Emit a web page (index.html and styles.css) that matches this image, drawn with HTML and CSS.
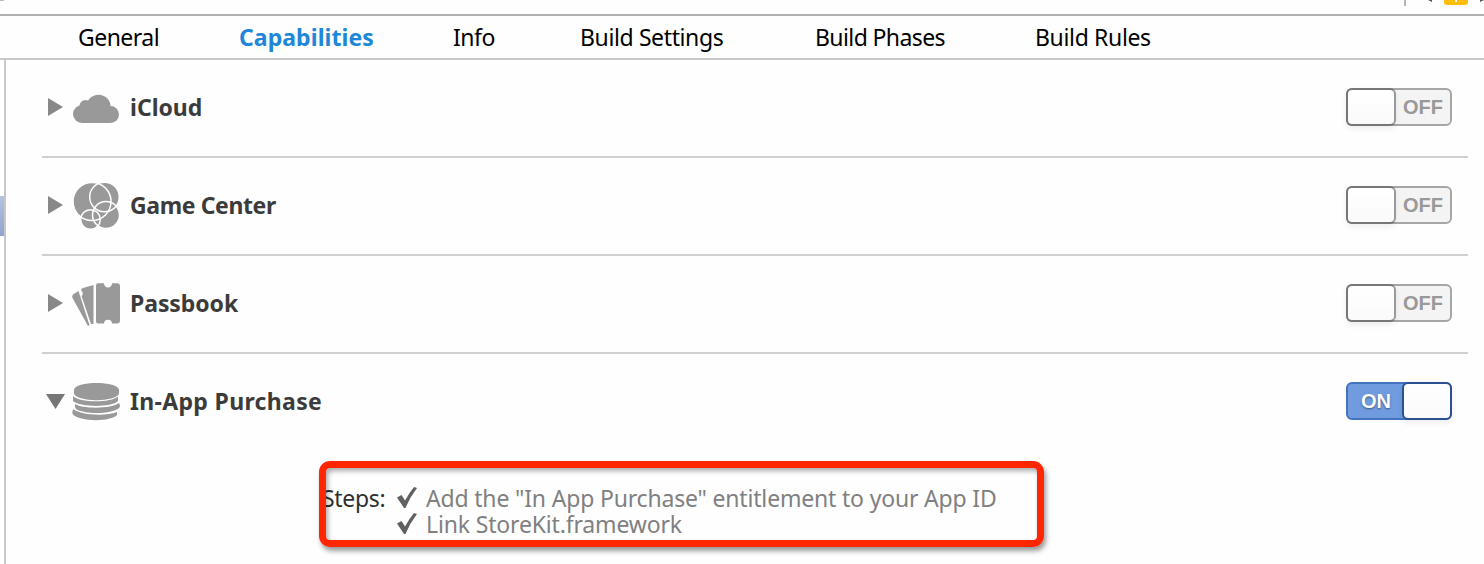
FILE: index.html
```html
<!DOCTYPE html>
<html lang="en">
<head>
<meta charset="utf-8">
<title>Capabilities</title>
<link rel="stylesheet" href="styles.css">
</head>
<body>
<div class="window">
  <header class="jumpbar">
    <span class="corner"></span>
    <svg class="issues" width="80" height="14" viewBox="0 0 80 14">
      <path d="M1 0V6" stroke="#b5b5b5" stroke-width="2"/>
      <path d="M24 0H28V2Z" fill="#555"/>
      <path d="M40 0H64V2Q64 5 61 5H43Q40 5 40 2Z" fill="#fdbd0b"/>
      <path d="M52 0V2" stroke="#fff" stroke-width="2"/>
      <path d="M76 0H80L76 2Z" fill="#555"/>
    </svg>
  </header>
  <nav class="tabs">
    <a class="tab general">General</a>
    <a class="tab capabilities active">Capabilities</a>
    <a class="tab info">Info</a>
    <a class="tab settings">Build Settings</a>
    <a class="tab phases">Build Phases</a>
    <a class="tab rules">Build Rules</a>
  </nav>
  <main class="pane">
    <aside class="gutter"><span class="selection"></span></aside>
    <div class="list">
      <section class="row">
        <svg class="arrow" width="18" height="20" viewBox="0 0 18 20"><path d="M2 1L17 10L2 19Z" fill="#888"/></svg>
        <svg class="icon" width="50" height="50" viewBox="0 0 50 50"><g fill="#999"><circle cx="11" cy="32" r="9"/><circle cx="14.500" cy="24" r="6"/><circle cx="27.500" cy="25" r="12.200"/><circle cx="39.500" cy="32.500" r="8.500"/><path d="M11 25H39V41H11Z"/></g></svg>
        <h2 class="name icloud">iCloud</h2>
        <div class="switch"><span class="knob"></span><span class="state">OFF</span></div>
      </section>
      <section class="row">
        <svg class="arrow" width="18" height="20" viewBox="0 0 18 20"><path d="M2 1L17 10L2 19Z" fill="#888"/></svg>
        <svg class="icon" width="50" height="50" viewBox="0 0 50 50">
          <g fill="#999"><circle cx="21" cy="21.500" r="19"/><circle cx="33.500" cy="17" r="14.800"/><circle cx="35" cy="35" r="13.500"/><circle cx="19.500" cy="39.500" r="9.800"/></g>
          <g fill="none" stroke="#fff" stroke-width="1.500"><circle cx="21" cy="21.500" r="19"/><circle cx="33.500" cy="17" r="14.800"/><circle cx="35" cy="35" r="13.500"/><circle cx="19.500" cy="39.500" r="9.800"/></g>
        </svg>
        <h2 class="name game">Game Center</h2>
        <div class="switch"><span class="knob"></span><span class="state">OFF</span></div>
      </section>
      <section class="row">
        <svg class="arrow" width="18" height="20" viewBox="0 0 18 20"><path d="M2 1L17 10L2 19Z" fill="#888"/></svg>
        <svg class="icon" width="50" height="50" viewBox="0 0 50 50">
          <g fill="#999"><path d="M27 8Q25 8 25 10V43Q25 45 27 45H33A4 3.500 0 0 1 41 45H46Q49 45 49 42V11Q49 8 46 8H41A4 4 0 0 1 33 8Z" transform="translate(0 -3.500) scale(1 1.090)"/><path d="M22.500 7V46H20L10.500 18A3 3 0 0 0 10.500 13Q9.500 11 12 10Z"/><path d="M7.500 13L18.500 47L17 48L1.500 20Q0.500 18 2 16.500Z"/></g>
        </svg>
        <h2 class="name passbook">Passbook</h2>
        <div class="switch"><span class="knob"></span><span class="state">OFF</span></div>
      </section>
      <section class="row last">
        <svg class="arrow down" width="20" height="18" viewBox="0 0 20 18"><path d="M0 2H19L9.500 17Z" fill="#777"/></svg>
        <svg class="icon" width="50" height="50" viewBox="0 0 50 50">
          <g fill="#999"><path d="M3 14C3 4.500 48 4.500 48 14V17C48 26.500 3 26.500 3 17Z"/><path d="M2 20C8 27 40 27 47 20.500V25C40 32 8 31 2 25Z"/><path d="M4 28C11 33 41 33 48 27Q50 30 48 32C40 39 12 38 5 33Q3.500 31 4 28Z"/><path d="M2.500 33C10 40 37 40 46 36V39C40 46 8 46 1.500 38Q0.500 35 2.500 33Z"/></g>
        </svg>
        <h2 class="name purchase">In-App Purchase</h2>
        <div class="switch on"><span class="state">ON</span><span class="knob"></span></div>
      </section>
      <section class="steps">
        <span class="steps-label">Steps:</span>
        <ul class="checks">
          <li><svg width="20" height="22" viewBox="0 0 20 22"><path d="M0 10.500L4.500 8L8 13.500Q12 6 17 0L20 1Q13 10 8.500 21H7Z" fill="#606060"/></svg><span class="step-add">Add the "In App Purchase" entitlement to your App ID</span></li>
          <li><svg width="20" height="22" viewBox="0 0 20 22"><path d="M0 10.500L4.500 8L8 13.500Q12 6 17 0L20 1Q13 10 8.500 21H7Z" fill="#606060"/></svg><span class="step-link">Link StoreKit.framework</span></li>
        </ul>
      </section>
    </div>
  </main>
  <div class="callout"></div>
</div>
</body>
</html>
```
FILE: styles.css
```css
* { box-sizing: border-box; }
body { margin: 0; background: #fefefe; font-family: "Noto Sans", "Open Sans", sans-serif; font-size: 23px; color: #000; }
.window { position: relative; width: 1484px; height: 564px; overflow: hidden; }
.jumpbar { display: flex; justify-content: space-between; height: 16px; border-bottom: 2px solid #b0b0b0; }
.corner { width: 4px; height: 1px; background: #bbb; }
.issues { display: block; }
.tabs { display: flex; height: 44px; padding-left: 78px; border-bottom: 2px solid #c8c8c8; line-height: 42px; white-space: nowrap; }
.tab { flex: none; }
.general { width: 161px; letter-spacing: -0.52px; }
.capabilities { width: 214px; letter-spacing: 0.06px; }
.info { width: 127px; letter-spacing: -0.5px; }
.settings { width: 235px; letter-spacing: -0.38px; }
.phases { width: 220px; letter-spacing: -0.6px; }
.rules { letter-spacing: -0.35px; }
.active { color: #2087d8; font-weight: 700; }
.pane { display: flex; height: 504px; }
.gutter { width: 6px; padding-top: 136px; border-right: 2px solid #c8c8ca; }
.selection { display: block; width: 4px; height: 40px; background: linear-gradient(#b5c3df, #93a4cf); }
.list { width: 1462px; padding-left: 36px; }
.row { display: flex; align-items: center; height: 98px; padding: 0 16px 2px 4px; border-bottom: 2px solid #d0d0d0; }
.row.last { border-bottom-color: transparent; }
.arrow { flex: none; width: 20px; margin-right: 5px; }
.arrow:not(.down) { width: 18px; margin-right: 7px; }
.icon { flex: none; margin-right: 9px; }
.name { margin: 0; font-size: 23px; line-height: 32px; font-weight: 700; color: #3b3b3b; white-space: nowrap; }
.game { letter-spacing: -0.38px; }
.passbook { letter-spacing: -0.08px; }
.purchase { letter-spacing: 0.33px; }
.switch { display: flex; width: 106px; height: 38px; margin-left: auto; border: 2px solid #a6a6a6; border-radius: 6px; background: #f4f4f4; }
.knob { width: 50px; height: 38px; margin: -2px 0 0 -2px; border: 2px solid #777; border-right-color: #999; border-radius: 6px; background: linear-gradient(#fff, #fafafa); box-shadow: 0 3px 6px #0001; }
.state { width: 54px; text-align: center; font: 700 20px/34px "Liberation Sans", sans-serif; color: #999; }
.switch.on { background: #709cdf; border-color: #4473c0; }
.on .state { width: 56px; color: #fff; text-shadow: 0 1px 2px #0007; }
.on .knob { margin: -2px -2px 0 -2px; border-color: #2b5190; }
.steps { display: flex; padding: 33px 0 0 280px; line-height: 26px; }
.steps-label { width: 75px; color: #303030; letter-spacing: -0.3px; }
.checks { margin: 0; padding: 0; list-style: none; color: #808080; white-space: nowrap; }
.checks li { display: flex; align-items: center; gap: 9px; height: 26px; }
.step-add { letter-spacing: -0.18px; }
.step-link { letter-spacing: -0.16px; }
.callout { position: absolute; left: 319px; top: 461px; width: 725px; height: 86px; border: 7px solid #ff2600; border-radius: 11px; box-shadow: 2px 4px 5px #0006, inset 2px 3px 5px #0005; }
```
